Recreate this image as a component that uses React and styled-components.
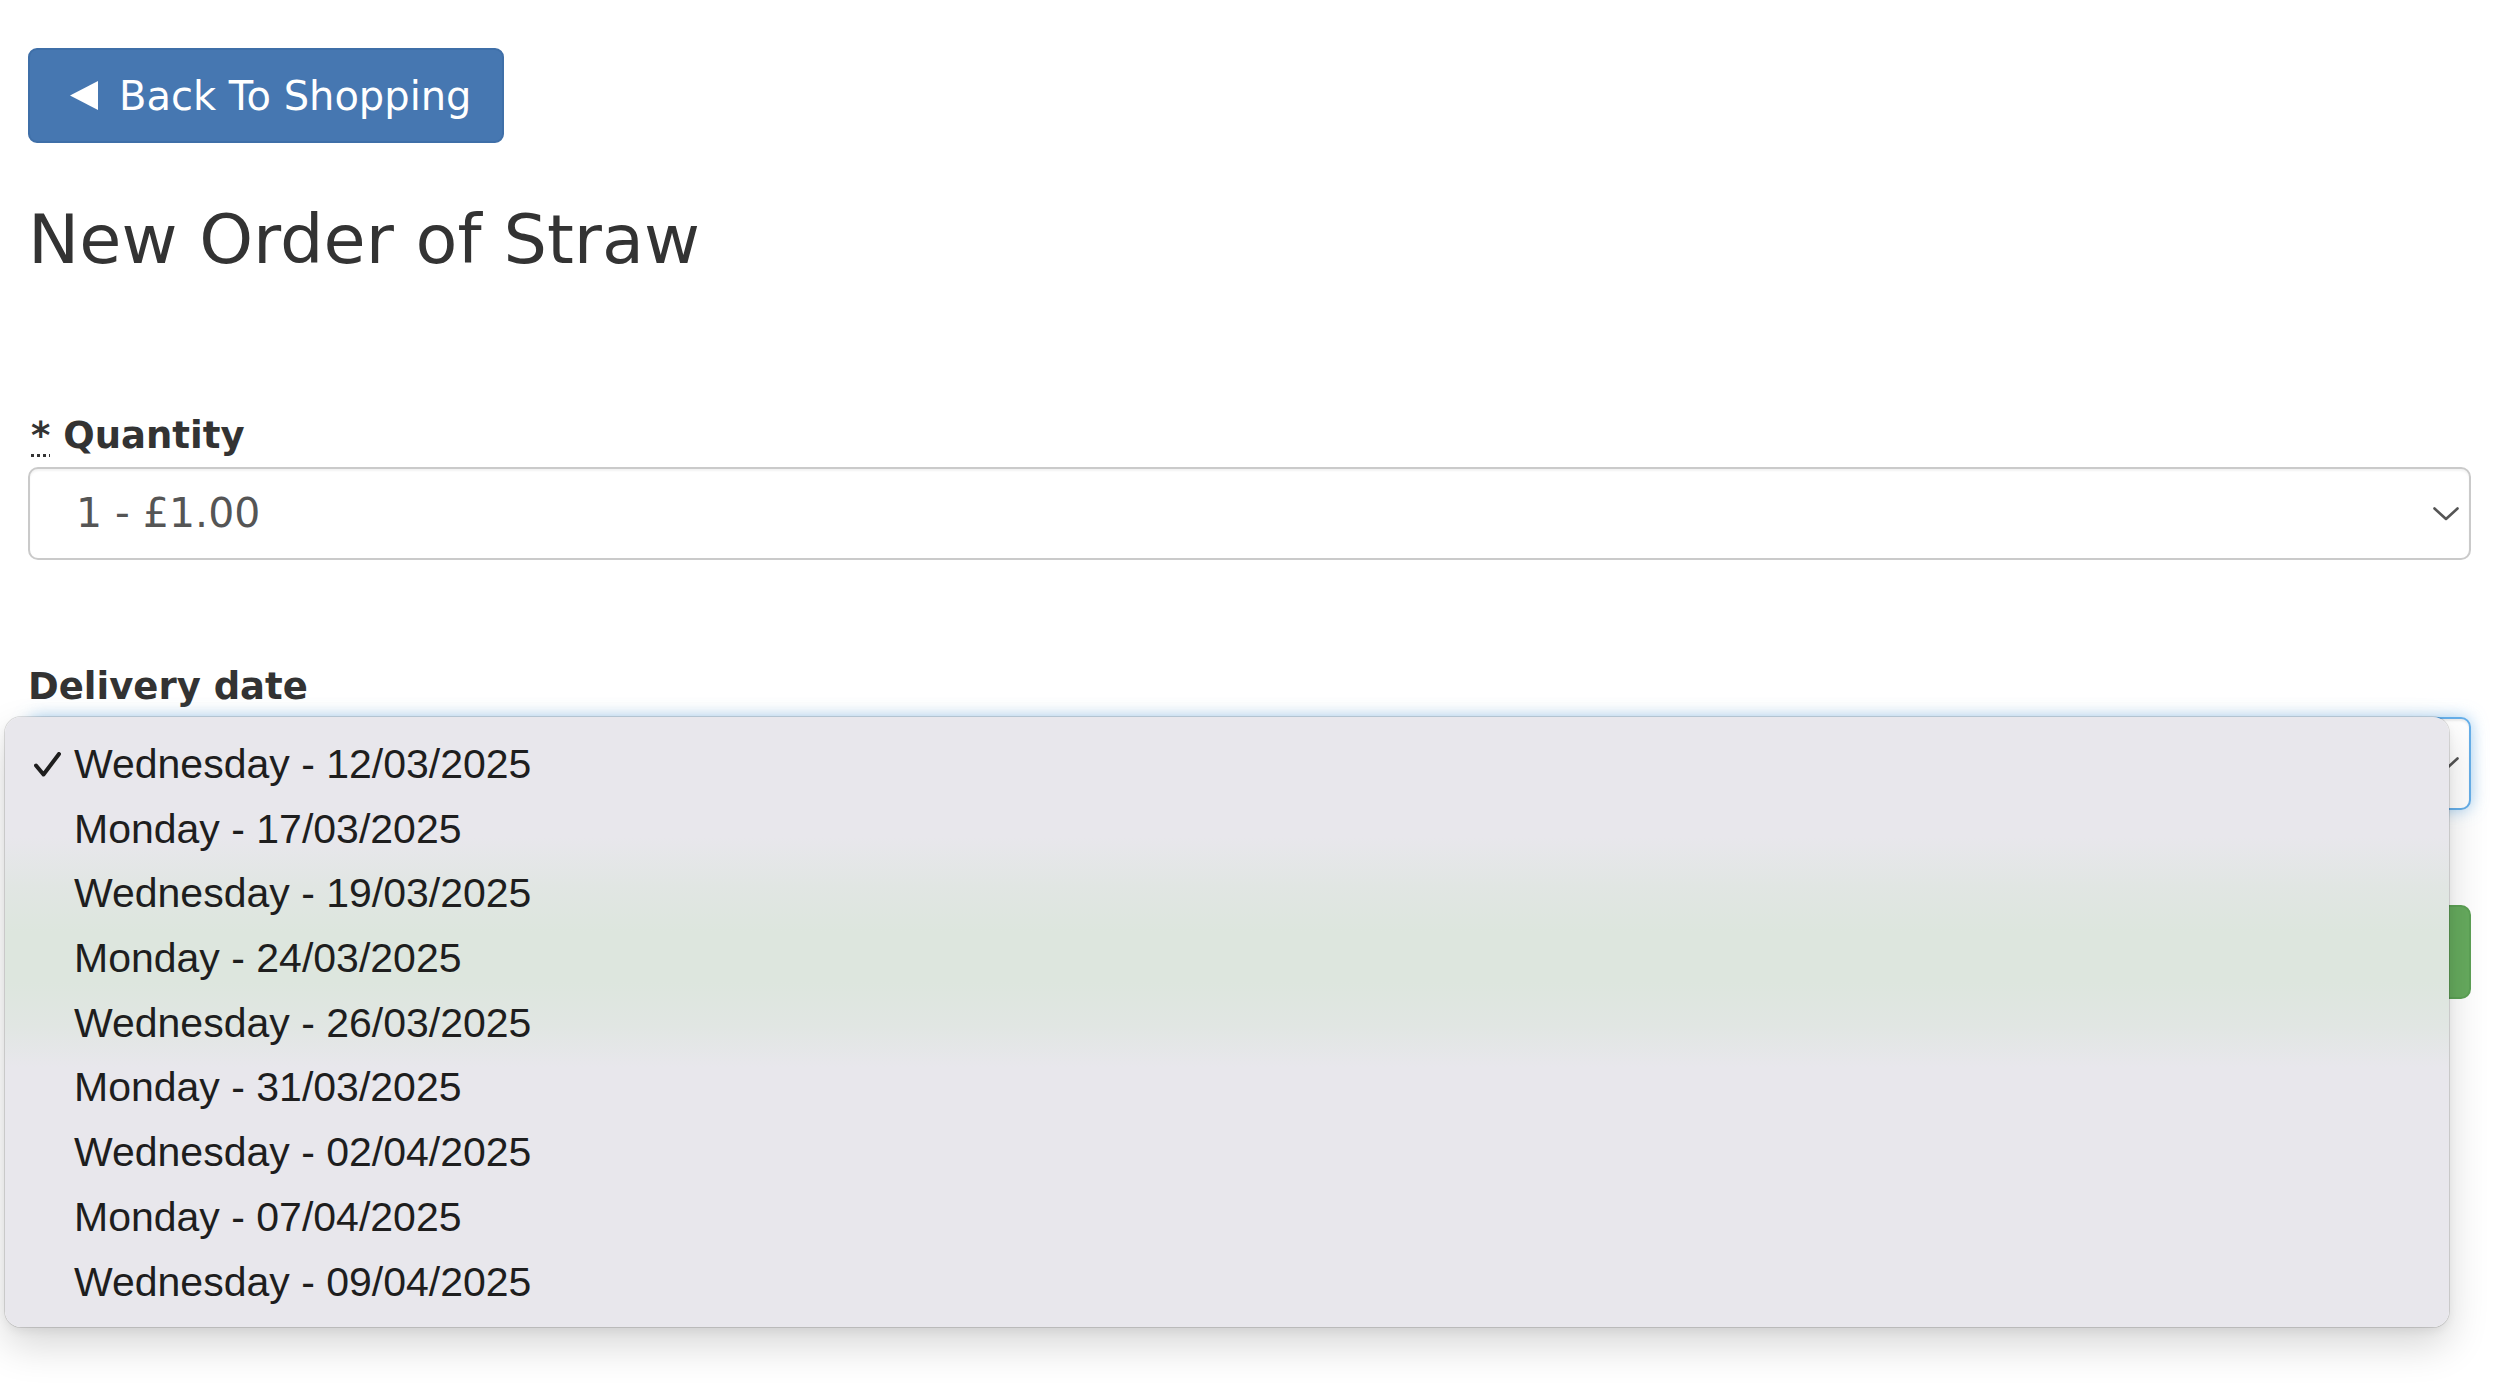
import React from "react";
import styled, { createGlobalStyle } from "styled-components";

const GlobalStyle = createGlobalStyle`
  html, body {
    margin: 0;
    padding: 0;
    background: #ffffff;
  }
  body {
    font-family: "DejaVu Sans", Verdana, sans-serif;
    color: #333333;
  }
  * { box-sizing: border-box; }
`;

const Page = styled.div`
  padding: 48px 29px 0 28px;
  min-height: 1384px;
  overflow: hidden;
`;

const BackButton = styled.button`
  display: inline-flex;
  align-items: center;
  gap: 21px;
  height: 95px;
  width: 476px;
  padding: 0 0 0 40px;
  margin: 0;
  border: 2px solid #3f6fa8;
  border-radius: 9px;
  background: #4677b1;
  color: #ffffff;
  font-family: "DejaVu Sans", Verdana, sans-serif;
  font-size: 40px;
  line-height: 1;
  cursor: pointer;
`;

const Title = styled.h1`
  margin: 57px 0 0;
  font-size: 68.5px;
  font-weight: 400;
  line-height: 79px;
  color: #333333;
`;

const Field = styled.div`
  margin-top: ${(p) => p.$top}px;
`;

const Label = styled.label`
  display: block;
  font-size: 37px;
  font-weight: 700;
  line-height: 42px;
  color: #333333;
  margin-bottom: ${(p) => p.$gap}px;
`;

const Required = styled.abbr`
  text-decoration: underline dotted;
  text-decoration-thickness: 3px;
  text-underline-offset: 6px;
  margin-left: 3px;
`;

const SelectWrap = styled.div`
  position: relative;
`;

const SelectBox = styled.div`
  display: flex;
  align-items: center;
  justify-content: space-between;
  height: 93px;
  padding: 0 10px 0 46px;
  border: 2px solid ${(p) => (p.$focused ? "#66afe9" : "#cacaca")};
  border-radius: 10px;
  background: #ffffff;
  box-shadow: ${(p) =>
    p.$focused
      ? "inset 0 2px 2px rgba(0,0,0,0.075), 0 0 16px rgba(102,175,233,0.6)"
      : "inset 0 2px 2px rgba(0,0,0,0.05)"};
`;

const SelectValue = styled.span`
  font-size: 41px;
  color: #555555;
  line-height: 1;
`;

const Chevron = styled.svg`
  width: 26px;
  height: 14px;
  flex: none;
  margin-left: auto;
`;

const PopupMenu = styled.ul`
  position: absolute;
  top: 0;
  left: -23px;
  right: 22px;
  margin: 0;
  padding: 15px 0 13px;
  list-style: none;
  border-radius: 16px;
  background: linear-gradient(
    to bottom,
    #e8e7ec 0px,
    #e8e7ec 120px,
    #e1e6e3 170px,
    #dde6de 215px,
    #dde6de 265px,
    #e1e6e3 310px,
    #e8e7ec 350px,
    #e8e7ec 100%
  );
  box-shadow: 0 0 0 1px rgba(0, 0, 0, 0.12), 0 18px 40px rgba(0, 0, 0, 0.16),
    0 4px 10px rgba(0, 0, 0, 0.06);
  z-index: 5;
`;

const MenuItem = styled.li`
  display: flex;
  align-items: center;
  height: 64.7px;
  padding-left: 29px;
  font-family: "Liberation Sans", Arial, sans-serif;
  font-size: 41px;
  line-height: 64.7px;
  color: #1e1e1e;
  white-space: nowrap;
`;

const CheckSlot = styled.span`
  display: inline-flex;
  align-items: center;
  width: 40px;
  flex: none;
`;

const SubmitButton = styled.button`
  display: block;
  width: 100%;
  height: 94px;
  margin-top: 95px;
  border: 2px solid #5ca155;
  border-radius: 10px;
  background: #66ab5e;
  color: #ffffff;
  font-family: "DejaVu Sans", Verdana, sans-serif;
  font-size: 39px;
`;

const dates = [
  "Wednesday - 12/03/2025",
  "Monday - 17/03/2025",
  "Wednesday - 19/03/2025",
  "Monday - 24/03/2025",
  "Wednesday - 26/03/2025",
  "Monday - 31/03/2025",
  "Wednesday - 02/04/2025",
  "Monday - 07/04/2025",
  "Wednesday - 09/04/2025",
];

const ChevronIcon = () => (
  <Chevron viewBox="0 0 26 14">
    <path
      d="M1.5 1.5 L13 12 L24.5 1.5"
      fill="none"
      stroke="#555"
      strokeWidth="2.6"
      strokeLinecap="round"
      strokeLinejoin="round"
    />
  </Chevron>
);

export default function App() {
  return (
    <>
      <GlobalStyle />
      <Page>
        <BackButton type="button">
          <svg width="28" height="29" viewBox="0 0 28 29">
            <polygon points="28,0 28,29 0,14.5" fill="#ffffff" />
          </svg>
          <span>Back To Shopping</span>
        </BackButton>

        <Title>New Order of Straw</Title>

        <Field $top={136}>
          <Label $gap={10}>
            <Required title="required">*</Required> Quantity
          </Label>
          <SelectBox>
            <SelectValue>1 - £1.00</SelectValue>
            <ChevronIcon />
          </SelectBox>
        </Field>

        <Field $top={106}>
          <Label $gap={9}>Delivery date</Label>
          <SelectWrap>
            <SelectBox $focused aria-label="Wednesday - 12/03/2025">
              <ChevronIcon />
            </SelectBox>
            <PopupMenu>
              {dates.map((d, i) => (
                <MenuItem key={d}>
                  <CheckSlot>
                    {i === 0 && (
                      <svg width="27" height="25" viewBox="0 0 27 25">
                        <path
                          d="M2 13.5 L9.5 22.5 L25 2"
                          fill="none"
                          stroke="#1e1e1e"
                          strokeWidth="4"
                          strokeLinecap="round"
                          strokeLinejoin="round"
                        />
                      </svg>
                    )}
                  </CheckSlot>
                  {d}
                </MenuItem>
              ))}
            </PopupMenu>
          </SelectWrap>
          <SubmitButton type="button">Add To Basket</SubmitButton>
        </Field>
      </Page>
    </>
  );
}
